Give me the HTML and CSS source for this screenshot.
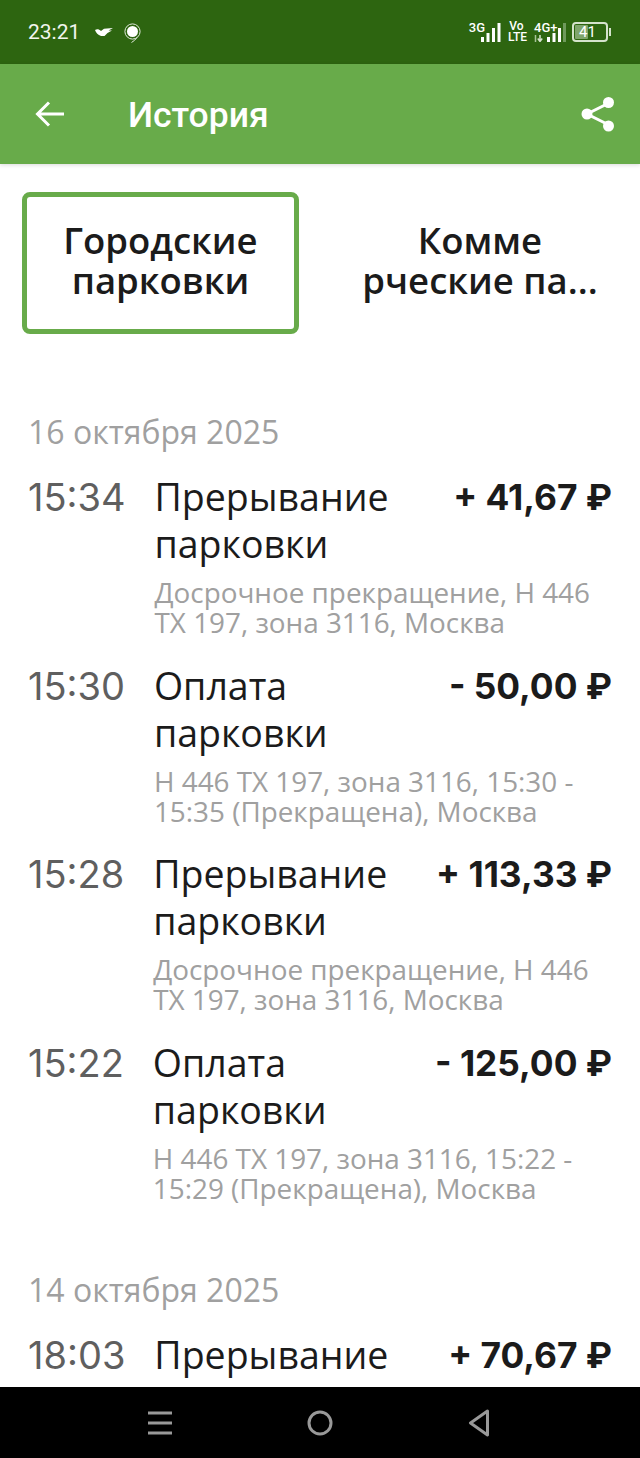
FILE: index.html
```html
<!DOCTYPE html>
<html lang="ru">
<head>
    <meta charset="UTF-8">
    <meta name="viewport" content="width=device-width, initial-scale=1.0">
    <title>История</title>
    <link rel="stylesheet" href="styles.css">
</head>
<body>

<div class="screen">
    <!-- Status bar -->
    <div class="status-bar">
        <div class="status-left">
            <span class="clock">23:21</span>
            <svg class="carrier-icon" width="18" height="9" viewBox="0 0 18 9">
                <path d="M0 2 C2 0.5 4 1 6 3 L9 0.8 L18 0 L13.5 2.6 L17 2.4 L12.5 5 L9.5 8 L6 8 C3 7 1 5 0 2 Z" fill="#fff"/>
            </svg>
            <svg class="pin-icon" width="17" height="20" viewBox="0 0 17 20">
                <circle cx="8.5" cy="8.5" r="7.6" fill="none" stroke="#dfe8da" stroke-width="1"/>
                <circle cx="8.5" cy="8.5" r="5.5" fill="#fff"/>
                <path d="M13 14.5 Q11 17.5 7.5 19.5" fill="none" stroke="#dfe8da" stroke-width="1"/>
            </svg>
        </div>
        <div class="status-right">
            <div class="net net-3g">
                <span class="net-label">3G</span>
                <svg width="20" height="19" viewBox="0 0 20 19">
                    <rect x="0" y="14" width="3" height="5" fill="#fff"/>
                    <rect x="5.5" y="10" width="3" height="9" fill="#fff"/>
                    <rect x="11" y="5" width="3" height="14" fill="#fff"/>
                    <rect x="16.5" y="0" width="3" height="19" fill="#fff"/>
                </svg>
            </div>
            <div class="volte"><span>Vo</span><span>LTE</span></div>
            <div class="net net-4g">
                <span class="net-label">4G+</span>
                <svg width="32" height="19" viewBox="0 0 32 19">
                    <path d="M1.5 12 V19" stroke="#a9c49b" stroke-width="1.5"/>
                    <path d="M6 12 V18 M3.8 15.5 L6 18.5 L8.2 15.5" fill="none" stroke="#d5e3cc" stroke-width="1.5"/>
                    <rect x="13" y="14" width="3" height="5" fill="#fff"/>
                    <rect x="18.5" y="10" width="3" height="9" fill="#fff"/>
                    <rect x="24" y="5" width="3" height="14" fill="#fff"/>
                    <rect x="29" y="0" width="3" height="19" fill="#6f9a5c"/>
                </svg>
            </div>
            <div class="battery">
                <div class="battery-level"></div>
                <span class="battery-num">41</span>
            </div>
            <div class="battery-tip"></div>
        </div>
    </div>

    <!-- Toolbar -->
    <div class="toolbar">
        <svg class="back-icon" width="30" height="28" viewBox="0 0 30 28">
            <path d="M29 14 H3 M14 2.5 L2.5 14 L14 25.5" fill="none" stroke="#fff" stroke-width="3"/>
        </svg>
        <h1 class="toolbar-title">История</h1>
        <svg class="share-icon" width="34" height="36" viewBox="0 0 34 36">
            <path d="M28 7 L6 18 L28 29" fill="none" stroke="#fff" stroke-width="3"/>
            <circle cx="27.5" cy="6.5" r="5.5" fill="#fff"/>
            <circle cx="6" cy="18" r="5.5" fill="#fff"/>
            <circle cx="27.5" cy="30" r="5.5" fill="#fff"/>
        </svg>
    </div>

    <div class="content">
        <!-- Tabs -->
        <div class="tabs">
            <div class="tab active">Городские<br>парковки</div>
            <div class="tab">Комме<br>рческие па...</div>
        </div>

        <div class="day">
            <div class="day-date">16 октября 2025</div>

            <div class="item">
                <div class="item-time">15:34</div>
                <div class="item-body">
                    <div class="item-top">
                        <div class="item-title">Прерывание парковки</div>
                        <div class="item-sum">+ 41,67 ₽</div>
                    </div>
                    <div class="item-desc">Досрочное прекращение, Н 446 ТХ 197, зона 3116, Москва</div>
                </div>
            </div>

            <div class="item">
                <div class="item-time">15:30</div>
                <div class="item-body">
                    <div class="item-top">
                        <div class="item-title">Оплата парковки</div>
                        <div class="item-sum">- 50,00 ₽</div>
                    </div>
                    <div class="item-desc">Н 446 ТХ 197, зона 3116, 15:30 - 15:35 (Прекращена), Москва</div>
                </div>
            </div>

            <div class="item">
                <div class="item-time">15:28</div>
                <div class="item-body">
                    <div class="item-top">
                        <div class="item-title">Прерывание парковки</div>
                        <div class="item-sum">+ 113,33 ₽</div>
                    </div>
                    <div class="item-desc">Досрочное прекращение, Н 446 ТХ 197, зона 3116, Москва</div>
                </div>
            </div>

            <div class="item">
                <div class="item-time">15:22</div>
                <div class="item-body">
                    <div class="item-top">
                        <div class="item-title">Оплата парковки</div>
                        <div class="item-sum">- 125,00 ₽</div>
                    </div>
                    <div class="item-desc">Н 446 ТХ 197, зона 3116, 15:22 - 15:29 (Прекращена), Москва</div>
                </div>
            </div>
        </div>

        <div class="day">
            <div class="day-date">14 октября 2025</div>

            <div class="item">
                <div class="item-time">18:03</div>
                <div class="item-body">
                    <div class="item-top">
                        <div class="item-title">Прерывание</div>
                        <div class="item-sum">+ 70,67 ₽</div>
                    </div>
                </div>
            </div>
        </div>
    </div>

    <!-- Navigation bar -->
    <div class="nav-bar">
        <svg width="24" height="26" viewBox="0 0 24 26">
            <path d="M0 3 H24 M0 13 H24 M0 23 H24" stroke="#999" stroke-width="3"/>
        </svg>
        <svg width="26" height="26" viewBox="0 0 26 26">
            <circle cx="13" cy="13" r="11" fill="none" stroke="#999" stroke-width="3"/>
        </svg>
        <svg width="22" height="28" viewBox="0 0 22 28">
            <path d="M19.5 2 L2.5 14 L19.5 26 Z" fill="none" stroke="#999" stroke-width="3" stroke-linejoin="round"/>
        </svg>
    </div>
</div>

</body>
</html>
```

FILE: styles.css
```css
body {
    margin: 0;
    font-family: "Open Sans", "Noto Sans", sans-serif;
    background-color: #fff;
}
.screen {
    display: flex;
    flex-direction: column;
    height: 100vh;
    overflow: hidden;
}

/* status bar */
.status-bar {
    flex: none;
    height: 64px;
    display: flex;
    justify-content: space-between;
    align-items: center;
    padding: 0 28px;
    box-sizing: border-box;
    background-color: #2d6510;
    color: #fff;
}
.status-left {
    display: flex;
    align-items: center;
}
.clock {
    font-family: Roboto, sans-serif;
    font-size: 21px;
    color: #f2f5ef;
}
.carrier-icon {
    margin-left: 15px;
}
.pin-icon {
    margin-left: 11px;
    margin-top: 2px;
}
.status-right {
    display: flex;
    align-items: center;
    font-family: Roboto, sans-serif;
    color: #fff;
}
.net {
    display: flex;
    align-items: flex-end;
    height: 19px;
}
.net-label {
    font-size: 13px;
    font-weight: 500;
    line-height: 10px;
    align-self: flex-start;
}
.net-3g svg {
    margin-left: -4px;
}
.net-4g {
    width: 32px;
    margin-left: 9px;
}
.net-4g .net-label {
    width: 0;
    white-space: nowrap;
}
.volte {
    display: flex;
    flex-direction: column;
    width: 17px;
    margin-left: 7px;
    font-size: 12px;
    font-weight: 500;
    line-height: 11px;
    text-align: center;
}
.battery {
    position: relative;
    width: 36px;
    height: 20px;
    margin-left: 6px;
    padding-right: 5px;
    box-sizing: border-box;
    border: 2px solid #d5e3cc;
    border-radius: 4px;
    text-align: center;
}
.battery-level {
    position: absolute;
    left: 1px;
    top: 1px;
    bottom: 1px;
    width: 13px;
    border-radius: 1px;
    background-color: #7fa56c;
}
.battery-num {
    position: relative;
    display: block;
    font-size: 15px;
    line-height: 16px;
}
.battery-tip {
    width: 2px;
    height: 8px;
    margin-left: 1px;
    margin-right: 1px;
    background-color: #d5e3cc;
}

/* toolbar */
.toolbar {
    flex: none;
    height: 100px;
    display: flex;
    align-items: center;
    padding: 0 25px 0 35px;
    box-sizing: border-box;
    background-color: #68ab4a;
    box-shadow: 0 1px 4px rgba(0, 0, 0, 0.15);
}
.toolbar-title {
    flex: 1;
    margin: 2px 0 0 63px;
    font-family: Roboto, sans-serif;
    font-size: 35.5px;
    font-weight: 500;
    color: #fff;
}

/* content */
.content {
    flex: 1;
    min-height: 0;
    overflow: hidden;
}
.tabs {
    display: flex;
    padding: 28px 0 0 22px;
}
.tab {
    flex: none;
    width: 277px;
    height: 142px;
    padding-bottom: 6px;
    display: flex;
    align-items: center;
    justify-content: center;
    box-sizing: border-box;
    font-size: 36.5px;
    font-weight: 600;
    line-height: 40px;
    text-align: center;
    color: #1b1b1b;
}
.tab + .tab {
    width: 310px;
    margin-left: 26px;
}
.tab.active {
    border: 5px solid #68ab4a;
    border-radius: 8px;
}
.day {
    padding: 0 28px;
}
.day-date {
    margin-top: 78px;
    font-size: 32px;
    line-height: 40px;
    color: #a0a0a0;
}
.day + .day .day-date {
    margin-top: 67px;
}
.item {
    display: flex;
    height: 164.5px;
    margin-top: 21px;
}
.item + .item {
    margin-top: 24px;
}
.item-time {
    margin-right: 29px;
    padding-top: 1px;
    font-family: Inter, "Open Sans", sans-serif;
    font-size: 38px;
    line-height: 47px;
    color: #5f5f5f;
}
.item-body {
    flex: 1;
    min-width: 0;
}
.item-top {
    display: flex;
    justify-content: space-between;
}
.item-title {
    width: 250px;
    font-size: 37.5px;
    line-height: 47px;
    color: #1b1b1b;
}
.item-sum {
    padding-top: 1px;
    font-family: Inter, "Open Sans", sans-serif;
    font-size: 35.3px;
    font-weight: 700;
    line-height: 47px;
    color: #1b1b1b;
    white-space: nowrap;
}
.item-desc {
    margin-top: 10px;
    font-size: 27.85px;
    line-height: 30px;
    color: #a0a0a0;
}

/* navigation bar */
.nav-bar {
    flex: none;
    height: 71px;
    display: flex;
    align-items: center;
    justify-content: space-between;
    padding: 0 150px 0 148px;
    background-color: #000;
}
```
